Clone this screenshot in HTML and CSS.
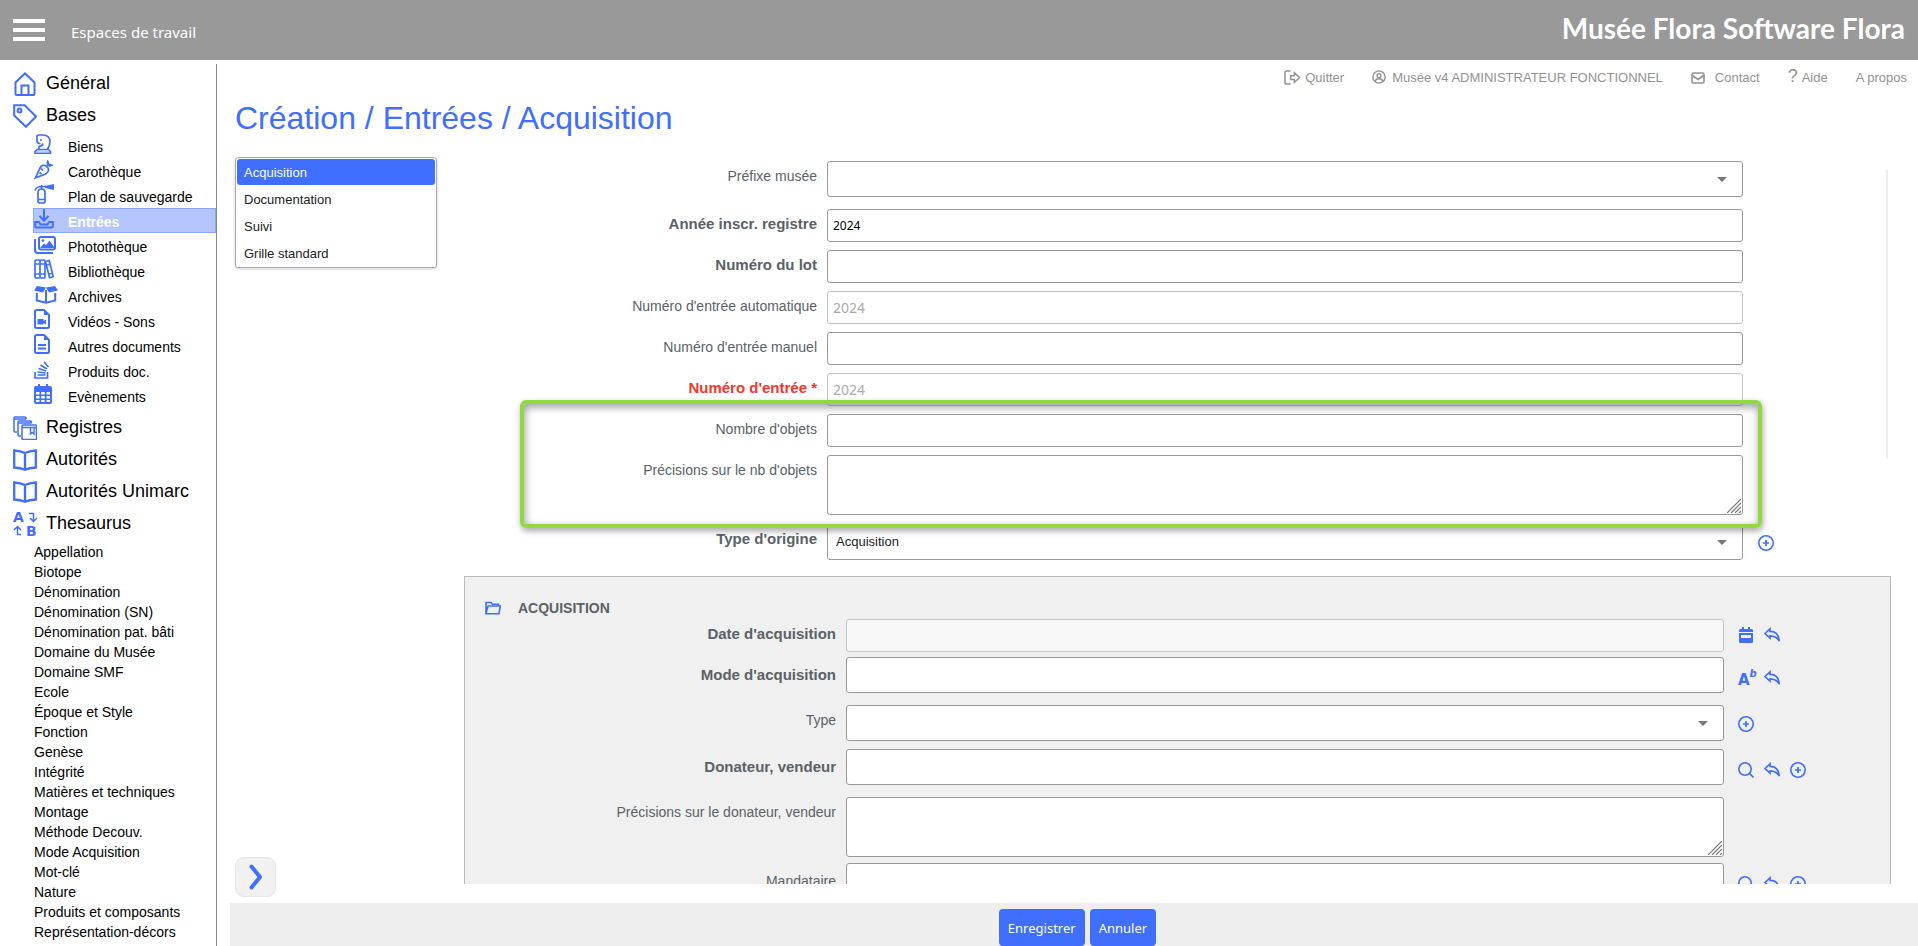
FILE: index.html
```html
<!DOCTYPE html>
<html lang="fr">
<head>
<meta charset="utf-8">
<title>Création / Entrées / Acquisition</title>
<link rel="stylesheet" href="styles.css">
</head>
<body>
<svg class="defs" aria-hidden="true">
  <symbol id="home" viewBox="0 0 24 24"><path d="M2.500 22V10.500L12 1.500l9.500 9V22q0 1-1 1h-17q-1 0-1-1zM8.500 23v-9.500h7V23"/></symbol>
  <symbol id="tag" viewBox="0 0 24 24"><path d="M1.200 1.200h10.500L23 12.500 13 22.800 1.200 11.500z"/><circle cx="6.500" cy="6.500" r="1.900"/></symbol>
  <symbol id="knight" viewBox="0 0 18 20"><path class="mid" d="M3 2.500Q3 1 5 1h4q7 .3 7 7 0 4-2.500 7M3 2.500v5.300q.5 2 3.500 1.700M9 9.500Q8.500 12 5 12.500v2.500M3 15.500h11.500l2 2v2H1v-2z"/><circle class="fill" cx="7" cy="6" r="1"/><path class="tint" d="M2 16.500h14v2.500H2z"/></symbol>
  <symbol id="carrot" viewBox="0 0 20 20"><path class="mid" d="M1.500 18.800 6 9q2.500-4.200 6-2 4.200 3 1.500 6.200-1 1.200-2.500 2zM7 9.500l2 1.800M5.500 13.500 7.500 15M10.500 9l.2 .3"/><path class="fill" d="M12.800 6.500q-.8-4 .7-5.800 2 1.600 1.800 4 2.700-.2 4 1.500-2 2.300-6 1z"/></symbol>
  <symbol id="extinguisher" viewBox="0 0 20 20"><path class="mid" d="M4 8.500Q4 5 7.500 5t3.500 3.500V17q0 2-2 2H6q-2 0-2-2zM4 15.500h7M7.500 5V1M1 6.500Q2.500 2.500 7 2.500h5"/><path class="fill" d="M11 2 20 0v6l-9-2z"/></symbol>
  <symbol id="inbox" viewBox="0 0 20 20"><path d="M10 0v11M5.500 7l4.500 4.500L14.500 7M1.200 13v4.500q0 1 1 1h15.600q1 0 1-1V13H15l-1.500 2.500h-7L5 13z"/></symbol>
  <symbol id="photos" viewBox="0 0 22 18"><rect x="5" y="1" width="16" height="12.500" rx="2"/><path d="M1 3v11q0 3 3 3h15"/><path class="fill" d="m6 12 4-4.500 2 1.500 3.500-4.500L20 11v1z"/><circle class="fill" cx="9" cy="4.500" r="1.300"/></symbol>
  <symbol id="books" viewBox="0 0 20 20"><path class="mid" d="M2 1h3q1 0 1 1v16q0 1-1 1H2q-1 0-1-1V2q0-1 1-1zM7 1h3q1 0 1 1v16q0 1-1 1H7q-1 0-1-1V2q0-1 1-1zM11.500 2.500l3.700-1 4 16-3.700 1.200zM1 5h10M1 15h10M12.500 6l3.700-1M15 15l3.500-1"/></symbol>
  <symbol id="openbox" viewBox="0 0 24 18"><path class="fill" d="M3 0 12 1.500 9 6.500 0 4.500zM21 0 12 1.500 15 6.500 24 4.500z"/><path d="M2.800 7v7.500l9.200 2.300 9.200-2.300V7M12 4v12.500"/></symbol>
  <symbol id="video" viewBox="0 0 16 20"><path d="M3 1h7l5 5v11.500q0 1.500-1.500 1.500H2.500Q1 19 1 17.500v-15Q1 1 3 1z"/><path class="fill" d="M10 1v5h5zM3.500 10h6v2l2.500-1.500v5L9.500 14v1.500h-6z"/></symbol>
  <symbol id="doc" viewBox="0 0 16 20"><path d="M3 1h7l5 5v11.500q0 1.500-1.500 1.500H2.500Q1 19 1 17.500v-15Q1 1 3 1zM4 11h8M4 14.500h8"/><path class="fill" d="M10 1v5h5z"/></symbol>
  <symbol id="stack" viewBox="0 0 16 18"><path class="mid" d="M1 11v6h12.500v-6M3.500 14h8M3.500 11l8 1M4.500 7.500l7.500 2.500M6.500 4l6.500 4M10 1l4.500 5"/></symbol>
  <symbol id="calendar" viewBox="0 0 18 20"><path class="fill" fill-rule="evenodd" d="M2 2h2V0h2v2h6V0h2v2h2q2 0 2 2v14q0 2-2 2H2q-2 0-2-2V4q0-2 2-2zM2 8v2.500h3.500V8zm5.200 0v2.500h3.500V8zm5.300 0v2.500H16V8zM2 12v2.500h3.500V12zm5.200 0v2.500h3.500V12zm5.300 0v2.500H16V12zM2 16v2h3.500v-2zm5.200 0v2h3.500v-2zm5.300 0v2H16v-2z"/></symbol>
  <symbol id="registers" viewBox="0 0 24 24"><path class="thin" d="M4 16H2q-1 0-1-1V2q0-1 1-1h10q1 0 1.500 2M1 3h12M8 20H6q-1 0-1-1V6q0-1 1-1h11q1.500 0 1.500 2.500M5 7h13M10 9h12.500q1 0 1 1v12.500q0 1-1 1H10q-1 0-1-1V10q0-1 1-1zM9 11.500h14M17.500 11v7l1.800-1.500L21 18v-7"/></symbol>
  <symbol id="book" viewBox="0 0 24 22"><path class="thick" d="M1.200 1.500Q8 2 12 4q4-2 10.800-2.500V18.500Q16 19 12 20.800q-4-1.800-10.800-2.300zM12 4v17"/></symbol>
  <symbol id="logout" viewBox="0 0 18 16"><path d="M7 1H3Q1 1 1 3v10q0 2 2 2h4M7 6h4V3l5.500 5L11 13v-3H7z"/></symbol>
  <symbol id="user" viewBox="0 0 16 16"><circle cx="8" cy="8" r="7"/><circle cx="8" cy="6.500" r="2.200"/><path d="M4 13q0-3 4-3t4 3"/></symbol>
  <symbol id="mail" viewBox="0 0 14 12"><rect x="1" y="1" width="12" height="10" rx="1.500"/><path d="m1.500 3.500 5.500 4 5.500-4"/></symbol>
  <symbol id="folder" viewBox="0 0 16 14"><path d="M1 12.500v-11h5l1.500 1.800H13.500V5M1 12.500 3 5h12.300L14 12.800H1z"/></symbol>
  <symbol id="plus" viewBox="0 0 16 16"><circle cx="8" cy="8" r="7.200"/><path class="mid" d="M8 5v6M5 8h6"/></symbol>
  <symbol id="reply" viewBox="0 0 16 14"><path d="M1 5.500 6 .8v2.600q8.500-.2 9.300 9.800Q12.500 8 6 7.900v2.300z"/></symbol>
  <symbol id="search" viewBox="0 0 16 16"><circle cx="7" cy="7" r="6.200"/><path d="m11.500 11.500 4 4"/></symbol>
  <symbol id="date" viewBox="0 0 14 16"><path class="fill" fill-rule="evenodd" d="M1.500 2H3V0h2v2h4V0h2v2h1.500Q14 2 14 3.500V5H0V3.500Q0 2 1.500 2zM0 6h14v8.500q0 1.500-1.500 1.500h-11Q0 16 0 14.500zm2 2v3h10V8z"/></symbol>
  <symbol id="grip" viewBox="0 0 14 14"><path d="M0 14 14 0M4 14 14 4M8 14l6-6M12 14l2-2"/></symbol>
</svg>

<header class="topbar">
  <button class="burger" aria-label="Menu"><span></span><span></span><span></span></button>
  <span class="workspace">Espaces de travail</span>
  <span class="brand">Musée Flora Software Flora</span>
</header>

<div class="page">
  <nav class="sidebar">
    <a class="section" href="#"><svg class="icon i24"><use href="#home"/></svg>Général</a>
    <a class="section" href="#"><svg class="icon i24"><use href="#tag"/></svg>Bases</a>
    <ul class="bases">
      <li><a href="#"><svg class="icon" width="18" height="20"><use href="#knight"/></svg><span>Biens</span></a></li>
      <li><a href="#"><svg class="icon" width="20" height="20"><use href="#carrot"/></svg><span>Carothèque</span></a></li>
      <li><a href="#"><svg class="icon" width="20" height="20"><use href="#extinguisher"/></svg><span>Plan de sauvegarde</span></a></li>
      <li><a href="#" class="current"><svg class="icon" width="20" height="20"><use href="#inbox"/></svg><span>Entrées</span></a></li>
      <li><a href="#"><svg class="icon low" width="22" height="18"><use href="#photos"/></svg><span>Photothèque</span></a></li>
      <li><a href="#"><svg class="icon" width="20" height="20"><use href="#books"/></svg><span>Bibliothèque</span></a></li>
      <li><a href="#"><svg class="icon low" width="24" height="18"><use href="#openbox"/></svg><span>Archives</span></a></li>
      <li><a href="#"><svg class="icon" width="16" height="20"><use href="#video"/></svg><span>Vidéos - Sons</span></a></li>
      <li><a href="#"><svg class="icon" width="16" height="20"><use href="#doc"/></svg><span>Autres documents</span></a></li>
      <li><a href="#"><svg class="icon low" width="16" height="18"><use href="#stack"/></svg><span>Produits doc.</span></a></li>
      <li><a href="#"><svg class="icon" width="18" height="20"><use href="#calendar"/></svg><span>Evènements</span></a></li>
    </ul>
    <a class="section" href="#"><svg class="icon i24"><use href="#registers"/></svg>Registres</a>
    <a class="section" href="#"><svg class="icon i24"><use href="#book"/></svg>Autorités</a>
    <a class="section" href="#"><svg class="icon i24"><use href="#book"/></svg>Autorités Unimarc</a>
    <a class="section" href="#"><svg class="icon i24" viewBox="0 0 24 24" aria-hidden="true"><path class="thin" d="M16 1.500h4.500v7M17 6l3.500 3.500L24 6M8 22.500H4.500v-7M1 18l3.500-3.500L8 18"/><text x="0" y="10" class="glyph">A</text><text x="13" y="24" class="glyph">B</text></svg>Thesaurus</a>
    <ul class="thesaurus">
      <li><a href="#">Appellation</a></li>
      <li><a href="#">Biotope</a></li>
      <li><a href="#">Dénomination</a></li>
      <li><a href="#">Dénomination (SN)</a></li>
      <li><a href="#">Dénomination pat. bâti</a></li>
      <li><a href="#">Domaine du Musée</a></li>
      <li><a href="#">Domaine SMF</a></li>
      <li><a href="#">Ecole</a></li>
      <li><a href="#">Époque et Style</a></li>
      <li><a href="#">Fonction</a></li>
      <li><a href="#">Genèse</a></li>
      <li><a href="#">Intégrité</a></li>
      <li><a href="#">Matières et techniques</a></li>
      <li><a href="#">Montage</a></li>
      <li><a href="#">Méthode Decouv.</a></li>
      <li><a href="#">Mode Acquisition</a></li>
      <li><a href="#">Mot-clé</a></li>
      <li><a href="#">Nature</a></li>
      <li><a href="#">Produits et composants</a></li>
      <li><a href="#">Représentation-décors</a></li>
    </ul>
  </nav>

  <main class="main">
    <div class="links">
      <a href="#"><svg class="icon" width="17" height="15"><use href="#logout"/></svg>Quitter</a>
      <a href="#" class="account"><svg class="icon" width="14" height="14"><use href="#user"/></svg>Musée v4 ADMINISTRATEUR FONCTIONNEL</a>
      <a href="#" class="contact"><svg class="icon" width="14" height="12"><use href="#mail"/></svg>Contact</a>
      <a href="#"><span class="question">?</span>Aide</a>
      <a href="#">A propos</a>
    </div>
    <h1>Création / Entrées / Acquisition</h1>

    <div class="content">
      <div class="side">
        <div class="tabs" role="tablist">
          <button class="tab active" role="tab" aria-selected="true">Acquisition</button>
          <button class="tab" role="tab">Documentation</button>
          <button class="tab" role="tab">Suivi</button>
          <button class="tab" role="tab">Grille standard</button>
        </div>
        <button class="expand" aria-label="Déplier"><svg width="14" height="26" viewBox="0 0 14 26"><path d="M2.500 2.500 11 13 2.500 23.500"/></svg></button>
      </div>

      <form class="form">
        <div class="fields">
          <div class="row loose"><label for="prefixe">Préfixe musée</label><div class="pick"><select id="prefixe"><option></option></select></div></div>
          <div class="row"><label for="annee" class="strong">Année inscr. registre</label><input id="annee" type="text" value="2024"></div>
          <div class="row"><label for="lot" class="strong">Numéro du lot</label><input id="lot" type="text"></div>
          <div class="row"><label for="auto">Numéro d'entrée automatique</label><input id="auto" type="text" value="2024" disabled></div>
          <div class="row"><label for="manuel">Numéro d'entrée manuel</label><input id="manuel" type="text"></div>
          <div class="row"><label for="entree" class="strong required">Numéro d'entrée *</label><input id="entree" type="text" value="2024" disabled></div>
          <div class="marked">
            <div class="row"><label for="nombre">Nombre d'objets</label><input id="nombre" type="text"></div>
            <div class="row"><label for="precisions">Précisions sur le nb d'objets</label><div class="area"><textarea id="precisions"></textarea><svg class="grip"><use href="#grip"/></svg></div></div>
            <div class="frame"></div>
          </div>
          <div class="row"><label for="origine" class="strong">Type d'origine</label><div class="pick"><select id="origine"><option>Acquisition</option></select></div>
            <div class="tools"><button type="button" aria-label="Ajouter"><svg class="icon"><use href="#plus"/></svg></button></div></div>
        </div>
        <div class="guide"></div>

        <section class="group">
          <h2><svg class="icon" width="16" height="14"><use href="#folder"/></svg>ACQUISITION</h2>
          <div class="row tight"><label for="dateacq" class="strong">Date d'acquisition</label><input id="dateacq" type="text" disabled>
            <div class="tools"><button type="button" aria-label="Calendrier"><svg class="icon"><use href="#date"/></svg></button><button type="button" aria-label="Annuler"><svg class="icon"><use href="#reply"/></svg></button></div></div>
          <div class="row loose lookup"><label for="mode" class="strong">Mode d'acquisition</label><input id="mode" type="text">
            <div class="tools"><button type="button" class="index" aria-label="Index">A<sup>b</sup></button><button type="button" aria-label="Annuler"><svg class="icon"><use href="#reply"/></svg></button></div></div>
          <div class="row"><label for="type">Type</label><div class="pick"><select id="type"><option></option></select></div>
            <div class="tools"><button type="button" aria-label="Ajouter"><svg class="icon"><use href="#plus"/></svg></button></div></div>
          <div class="row loose lookup"><label for="donateur" class="strong">Donateur, vendeur</label><input id="donateur" type="text">
            <div class="tools"><button type="button" aria-label="Rechercher"><svg class="icon"><use href="#search"/></svg></button><button type="button" aria-label="Annuler"><svg class="icon"><use href="#reply"/></svg></button><button type="button" aria-label="Ajouter"><svg class="icon"><use href="#plus"/></svg></button></div></div>
          <div class="row snug"><label for="precdon">Précisions sur le donateur, vendeur</label><div class="area"><textarea id="precdon"></textarea><svg class="grip"><use href="#grip"/></svg></div></div>
          <div class="row loose lookup"><label for="mandataire">Mandataire</label><input id="mandataire" type="text">
            <div class="tools"><button type="button" aria-label="Rechercher"><svg class="icon"><use href="#search"/></svg></button><button type="button" aria-label="Annuler"><svg class="icon"><use href="#reply"/></svg></button><button type="button" aria-label="Ajouter"><svg class="icon"><use href="#plus"/></svg></button></div></div>
        </section>
      </form>
    </div>

    <footer class="actions">
      <button>Enregistrer</button>
      <button>Annuler</button>
    </footer>
  </main>
</div>
</body>
</html>
```
FILE: styles.css
```css
:root {
  --blue: #406eff;
  --ink: #5a6268;
  --line: #999;
  --sans: "Liberation Sans", Arial, sans-serif;
  --ui: "Noto Sans", Tahoma, sans-serif;
}

* { box-sizing: border-box; }

body {
  margin: 0;
  height: 100vh;
  display: flex;
  flex-direction: column;
  overflow: hidden;
  background: #fff;
  font: 14px/16px var(--sans);
  color: #000;
}

a { color: inherit; text-decoration: none; }
ul { list-style: none; margin: 0; padding: 0; }
button { font: inherit; border: 0; padding: 0; background: none; cursor: pointer; }

.defs { position: absolute; width: 0; height: 0; }

.icon {
  flex: none;
  fill: none;
  stroke: var(--blue);
  stroke-width: 2;
}
.i24 { width: 24px; height: 24px; }
.fill { fill: var(--blue); stroke: none; }
.tint { fill: var(--blue); fill-opacity: .35; stroke: none; }
.thin { stroke-width: 1.500; }
.mid { stroke-width: 1.700; }
.thick { stroke-width: 2.300; }
.glyph { font: bold 14px "DejaVu Sans", sans-serif; fill: var(--blue); stroke: none; }

/* Top bar */
.topbar {
  flex: none;
  height: 60px;
  display: flex;
  align-items: center;
  padding: 0 13px;
  background: #999;
  color: #fff;
}
.burger { width: 32px; display: grid; gap: 5px; }
.burger span { height: 4px; background: #fff; }
.workspace { margin: 4px 0 0 26px; font: 15px/20px var(--ui); }
.brand { margin: 0 0 4px auto; font: bold 28px/32px Lato, sans-serif; }

.page { flex: 1; min-height: 0; display: flex; }

/* Navigation tree */
.sidebar {
  flex: none;
  width: 217px;
  margin-top: 4px;
  padding-top: 3px;
  border-right: 1px solid #888;
  overflow: hidden;
}
.section {
  display: flex;
  align-items: center;
  gap: 9px;
  height: 32px;
  padding-left: 13px;
  font-size: 18px;
}
.section .icon { margin-top: 2px; }
.bases { padding: 2px 0 3px 33px; }
.bases a {
  display: grid;
  grid-template-columns: 34px 1fr;
  height: 25px;
  border: 1px solid transparent;
}
.bases span { padding-top: 5px; }
.bases .low { margin-top: 2px; }
.bases .current {
  background: #b5c6ff;
  border-color: #8aa5ff;
  color: #fff;
  font-weight: bold;
}
.thesaurus { padding: 3px 0 0 34px; line-height: 20px; }

/* Main column */
.main {
  flex: 1;
  min-width: 0;
  margin-left: 13px;
  display: flex;
  flex-direction: column;
}
.links {
  display: flex;
  justify-content: flex-end;
  gap: 28px;
  height: 38px;
  padding: 0 11px 0 0;
  font-size: 13px;
  line-height: 35px;
  color: #929292;
}
.links a { display: flex; gap: 4px; }
.links .account { gap: 6px; }
.links .contact { gap: 10px; }
.links .icon { stroke: #929292; stroke-width: 1.600; align-self: flex-start; margin-top: 10px; }
.links .contact .icon { margin-top: 12px; }
.question { font-size: 18px; line-height: 32px; }

h1 {
  margin: 0 0 0 5px;
  font-size: 32px;
  font-weight: normal;
  line-height: 40px;
  color: var(--blue);
}

.content {
  flex: 1;
  min-height: 0;
  display: flex;
  padding: 19px 27px 0 5px;
}
.side {
  flex: none;
  width: 202px;
  display: flex;
  flex-direction: column;
  justify-content: space-between;
  align-items: flex-start;
  padding-bottom: 6px;
}
.tabs {
  width: 100%;
  display: grid;
  gap: 1px;
  padding: 1px;
  border: 1px solid #aaa;
  border-radius: 3px;
  box-shadow: 0 1px 3px rgba(0, 0, 0, .2);
}
.tab {
  height: 26px;
  padding: 1px 7px 0;
  border-radius: 3px;
  text-align: left;
  font-size: 13px;
  color: #222;
}
.tab.active { background: var(--blue); color: #fff; }
.expand {
  width: 41px;
  height: 40px;
  display: grid;
  place-items: center;
  background: #f1f1f1;
  border: 1px solid #e6e6e6;
  border-radius: 9px;
}
.expand path { fill: none; stroke: var(--blue); stroke-width: 4; stroke-linecap: round; stroke-linejoin: round; }

/* Form */
.form {
  position: relative;
  flex: 1;
  min-width: 0;
  margin: 0 0 19px 27px;
  padding-top: 4px;
  overflow: hidden;
}
.fields { padding: 0 2px 8px; }
.row {
  display: grid;
  grid-template-columns: 351px minmax(0, 1fr) 136px;
  column-gap: 10px;
  align-items: start;
  margin-bottom: 8px;
}
.row.loose { margin-bottom: 12px; }
.row.tight { margin-bottom: 5px; }
.row.snug { margin-bottom: 6px; }
.row > label { padding-top: 7px; text-align: right; color: var(--ink); }
.row.lookup > label { padding-top: 10px; }
.row .strong { font-weight: bold; font-size: 15px; }
.row .required { color: #f0382c; }

input, select, textarea {
  display: block;
  width: 100%;
  height: 33px;
  margin: 0;
  padding: 0 5px;
  border: 1px solid var(--line);
  border-radius: 3px;
  background: #fff;
  font: 12px/16px var(--ui);
  color: #000;
}
input:disabled { border-color: #c4c4c4; font-size: 14px; color: #aaa; background: rgba(255, 255, 255, .5); }
.lookup input { height: 36px; }

.pick { position: relative; }
select {
  appearance: none;
  height: 36px;
  padding: 0 8px;
  font: 13px/16px var(--sans);
  color: #222;
}
.pick::after {
  content: "";
  position: absolute;
  top: 16px;
  right: 16px;
  border: 5px solid transparent;
  border-top-color: #777;
  border-bottom: 0;
}
.area { position: relative; }
textarea { height: 60px; resize: none; }
.grip {
  position: absolute;
  right: 2px;
  bottom: 2px;
  width: 14px;
  height: 14px;
  fill: none;
  stroke: #777;
  stroke-width: 1.200;
}

.tools { display: flex; gap: 10px; padding: 8px 0 0 4px; }
.fields .tools { padding-left: 5px; }
.lookup .tools { padding-top: 13px; }
.pick + .tools { padding-top: 11px; }
.tools button { width: 16px; height: 16px; }
.tools .icon { display: block; width: 16px; height: 16px; stroke-width: 1.600; }
.tools .index {
  display: flex;
  font: bold 15px/20px "DejaVu Sans", sans-serif;
  color: var(--blue);
}
.index sup { font: italic bold 10px/8px "DejaVu Sans", sans-serif; }

.marked { position: relative; z-index: 1; margin-bottom: 9px; }
.frame {
  position: absolute;
  inset: -14px 127px -13px 54px;
  border: 4px solid #93d843;
  border-radius: 6px;
  box-shadow: 1px 3px 6px rgba(0, 0, 0, .35), inset 1px 3px 8px rgba(0, 0, 0, .4);
  pointer-events: none;
}

.guide {
  position: absolute;
  top: 13px;
  right: 3px;
  width: 2px;
  height: 288px;
  background: #eee;
}

.group {
  padding: 21px 20px 0;
  border: 1px solid #bbb;
  background: #f0f0f0;
}
.group h2 {
  display: flex;
  align-items: flex-start;
  gap: 17px;
  margin: 0;
  height: 21px;
  font-size: 14px;
  line-height: 20px;
  color: var(--ink);
}
.group h2 .icon { margin-top: 3px; stroke-width: 1.600; }

.actions {
  flex: none;
  height: 43px;
  display: flex;
  justify-content: center;
  gap: 5px;
  padding: 6px 0 0 7px;
  background: #eee;
}
.actions button {
  height: 37px;
  padding: 0 9px;
  border-radius: 4px;
  background: var(--blue);
  color: #fff;
  font: 13px/18px var(--ui);
}
```
